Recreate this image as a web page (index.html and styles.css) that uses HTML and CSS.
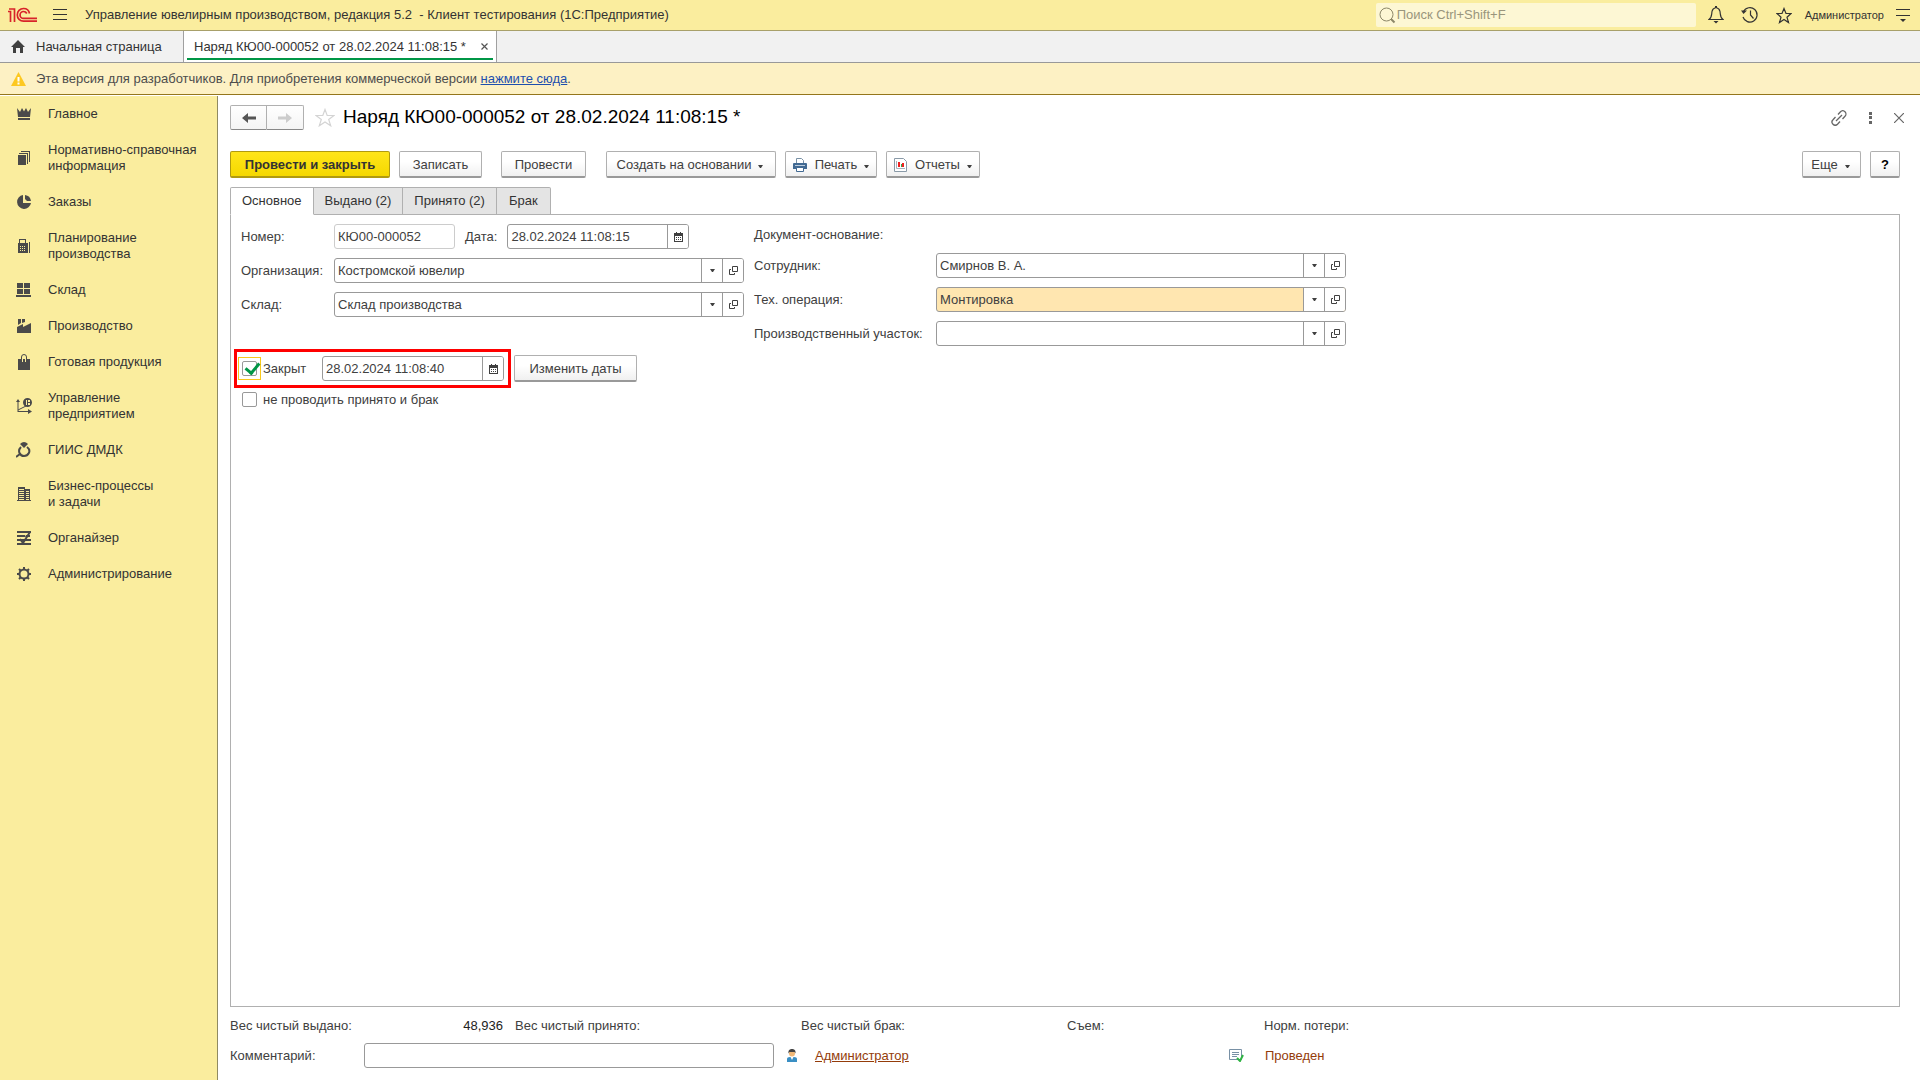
FILE: index.html
```html
<!DOCTYPE html>
<html lang="ru">
<head>
<meta charset="utf-8">
<title>Наряд КЮ00-000052 от 28.02.2024 11:08:15</title>
<link rel="stylesheet" href="styles.css">
</head>
<body>
<svg class="defs" width="0" height="0" aria-hidden="true">
  <symbol id="calendar" viewBox="0 0 9 10"><path fill="#404040" fill-rule="evenodd" d="M2 0h1v1h3V0h1v1h2v9H0V1h2zM1 4v5h7V4z"/><path fill="#404040" d="M2 5h1v1H2zm2 0h1v1H4zm2 0h1v1H6zM2 7h1v1H2zm2 0h1v1H4zm2 0h1v1H6z"/></symbol>
  <symbol id="open" viewBox="0 0 9 9"><path fill="none" stroke="#404040" d="M3.500.5h5v5h-5zM2 3.500H.5v5h5V7"/></symbol>
  <symbol id="caret" viewBox="0 0 5 3"><path fill="#404040" d="M0 0h5L3 3H2z"/></symbol>
</svg>
<div class="app">
  <header class="titlebar">
    <svg class="logo" width="30" height="16" viewBox="0 0 30 16" fill="none" stroke="#d8232a"><path stroke-width="1.700" d="M0 4.500h2.500V15M1 2h5.500v13M4 4v0M21.500 6.500C21 3.500 18.500 1.500 15.500 1.500A6.200 6.200 0 0 0 9.300 7.900a6.200 6.200 0 0 0 6.200 6.300H29M18.800 6.500A3.700 3.700 0 0 0 15.500 4.500a3.400 3.400 0 0 0 0 6.900H29"/></svg>
    <button class="icon-btn menu-btn" aria-label="Меню"><svg width="14" height="12" viewBox="0 0 14 12" stroke="#333"><path d="M0 .5h14M0 5.500h14M0 10.500h14"/></svg></button>
    <h1 class="app-name">Управление ювелирным производством, редакция 5.2 &nbsp;- Клиент тестирования (1С:Предприятие)</h1>
    <label class="search">
      <svg width="17" height="17" viewBox="0 0 17 17" fill="none" stroke="#8c8768"><circle cx="7.500" cy="7.500" r="6.500"/><path stroke-width="2" d="m12 12 3.500 3.500"/></svg>
      <input type="text" placeholder="Поиск Ctrl+Shift+F" aria-label="Поиск">
    </label>
    <div class="tools">
      <button class="icon-btn" aria-label="Уведомления"><svg width="16" height="18" viewBox="0 0 16 18" fill="none" stroke="#333" stroke-width="1.200"><path d="M1 13.500h14c-3-2-2.500-5-3-8C11.500 3 10 2 8 1.500 6 2 4.500 3 4 5.500c-.5 3 0 6-3 8z"/><path fill="#333" stroke="none" d="M5.500 15h5L8 17.500zM7 0h2v2H7z"/></svg></button>
      <button class="icon-btn" aria-label="История"><svg width="18" height="18" viewBox="0 0 18 18" fill="none" stroke="#333" stroke-width="1.200"><path d="M2.500 5.500A7.200 7.200 0 1 1 2 11M9.500 4.500V9l3 3.500"/><path fill="#333" stroke="none" d="M0 4.500h6L2.500 8z"/></svg></button>
      <button class="icon-btn" aria-label="Избранное"><svg width="16" height="17" viewBox="0 0 16 17" fill="none" stroke="#333" stroke-width="1.200"><path d="m8 1.500 2 5h5l-4 3.700 1.500 5.300L8 12.400l-4.500 3.100L5 10.200 1 6.500h5z"/></svg></button>
      <a class="user" href="#">Администратор</a>
      <button class="icon-btn" aria-label="Сервис"><svg width="14" height="14" viewBox="0 0 14 14"><path stroke="#333" d="M0 1.500h14M0 7.500h14"/><path fill="#333" d="M4 11h6l-3 3z"/></svg></button>
    </div>
  </header>

  <nav class="windows" aria-label="Открытые окна">
    <a class="window home" href="#"><svg width="14" height="13" viewBox="0 0 14 13"><path fill="#404040" d="M7 0l7 7h-2v6H9V8H5v5H2V7H0z"/></svg>Начальная страница</a>
    <div class="window current"><a href="#">Наряд КЮ00-000052 от 28.02.2024 11:08:15 *</a><button class="icon-btn" aria-label="Закрыть вкладку"><svg width="7" height="7" viewBox="0 0 7 7" stroke="#555" stroke-width="1.200"><path d="m.5.5 6 6m0-6-6 6"/></svg></button></div>
  </nav>

  <p class="notice"><svg width="15" height="14" viewBox="0 0 15 14"><path fill="#fdc821" d="M7.500 0 15 14H0z"/><path fill="#fff" d="M6.500 5h2v4.500h-2zM6.500 10.500h2v2h-2z"/></svg><span>Эта версия для разработчиков. Для приобретения коммерческой версии <a href="#">нажмите сюда</a>.</span></p>

  <div class="body">
    <nav class="sections" aria-label="Разделы">
      <a href="#"><svg viewBox="0 0 16 16"><path d="M1 2l3 4 2-4 2 3.500L10 2l2 4 3-4-1 9H2zM2 12h12v2H2z"/></svg>Главное</a>
      <a href="#"><svg viewBox="0 0 16 16"><path d="M2 5h8v10H2zM3 3h9v11h-1V4H3zM5 1h9v11h-1V2H5z"/></svg>Нормативно-справочная информация</a>
      <a href="#"><svg viewBox="0 0 16 16"><path d="M7 1v8h8a7 7 0 1 1-8-8zM9 1a7 7 0 0 1 6 6h-4L9 5z"/></svg>Заказы</a>
      <a href="#"><svg viewBox="0 0 16 16"><path fill-rule="evenodd" d="M2 5h1V1h7v4h2v10H2zM4 2v3h5V2zM4 8v1h1V8zm2 0v1h1V8zm2 0v1h1V8zM4 10v1h1v-1zm2 0v1h1v-1zm2 0v1h1v-1zM4 12v1h1v-1zm2 0v1h1v-1zm2 0v1h1v-1zM13 4h1v11h-1z"/></svg>Планирование производства</a>
      <a href="#"><svg viewBox="0 0 16 16"><path d="M1 1h6v5H1zm7 0h6v5H8zM1 7h6v5H1zm7 0h6v5H8zM0 13h15v2H0z"/></svg>Склад</a>
      <a href="#"><svg viewBox="0 0 16 16"><path d="M1 15V9l6-3v3l8-4v10zM2 1h3v4L2 7zm4 0h3v3L6 5z"/></svg>Производство</a>
      <a href="#"><svg viewBox="0 0 16 16"><path d="M2 5h12v11H2z"/><path fill="none" stroke="#4a4a4a" d="M5.500 6V3q0-2.500 2.500-2.500T10.500 3v3"/><path fill="none" stroke="#faed9e" d="M6.500 8V4.500h3V8"/></svg>Готовая продукция</a>
      <a href="#"><svg viewBox="0 0 16 16"><path d="M0 4l2-3 2 3H2.500v9H12v-2l4 2.500-4 2.500v-2H1.500V4z"/><path fill="none" stroke="#4a4a4a" d="m2 12 8-4"/><path fill-rule="evenodd" d="M11.500 0a4.500 4.500 0 1 1 0 9 4.500 4.500 0 0 1 0-9zM10 2v5h1V2zm2 0v2h2V2zm0 3v2h2V5z"/></svg>Управление предприятием</a>
      <a href="#"><svg viewBox="0 0 16 16"><path d="M4 2q4-4 8 0L8 6z"/><path fill="none" stroke="#4a4a4a" stroke-width="2" d="M11 5c5 4 1 9-3 9s-7-5-3-9M4 12l-4 3"/></svg>ГИИС ДМДК</a>
      <a href="#"><svg viewBox="0 0 16 16"><path d="M2 1h7v2h5v11h1v1H1v-1h1zM3 3v1h5V3zm0 2v1h5V5zm0 2v1h5V7zm0 2v1h5V9zm0 2v1h5v-1zm0 2v1h5v-1zM10 5v1h3V5zm0 2v1h3V7zm0 2v1h3V9zm0 2v1h3v-1zm0 2v1h3v-1z" fill-rule="evenodd"/></svg>Бизнес-процессы <br>и задачи</a>
      <a href="#"><svg viewBox="0 0 16 16"><path d="M1 1h14v2H1zM1 5h8v2H1zM10 5h4v2h-5zM1 9h14v2H1zM1 13h14v2H1z"/><path fill="none" stroke="#4a4a4a" stroke-width="2" d="m4 9 3 4 7-11"/></svg>Органайзер</a>
      <a href="#"><svg viewBox="0 0 16 16"><circle cx="8" cy="8" r="4.500" fill="none" stroke="#4a4a4a" stroke-width="2"/><path fill="none" stroke="#4a4a4a" stroke-width="2" d="M8 1v2.500M8 12.500V15M1 8h2.500M12.500 8H15M3 3l1.500 1.500M11.500 11.500 13 13M13 3l-1.500 1.500M4.500 11.500 3 13"/></svg>Администрирование</a>
    </nav>

    <main class="document">
      <div class="heading">
        <div class="history">
          <button aria-label="Назад"><svg width="14" height="10" viewBox="0 0 14 10"><path fill="#555" d="M0 5l6-5v3.500h8v3H6V10z"/></svg></button>
          <button aria-label="Вперед" disabled><svg width="14" height="10" viewBox="0 0 14 10"><path fill="#ccc" d="M14 5L8 0v3.500H0v3h8V10z"/></svg></button>
        </div>
        <button class="icon-btn" aria-label="В избранное"><svg width="20" height="19" viewBox="0 0 20 19" fill="none" stroke="#d4d4d4" stroke-width="1.200"><path d="m10 1.500 2.200 6H19l-5.300 4 2 6.300L10 14l-5.700 3.800 2-6.300L1 7.500h6.800z"/></svg></button>
        <h2>Наряд КЮ00-000052 от 28.02.2024 11:08:15 *</h2>
        <div class="heading-tools">
          <button class="icon-btn" aria-label="Ссылка"><svg width="16" height="16" viewBox="0 0 16 16" fill="none" stroke="#666" stroke-width="1.300"><path d="m5 11 6-6M7 4.500l2.500-2.700a3 3 0 0 1 4.500 4.500L11.500 9M4.500 7 2 9.700a3 3 0 0 0 4.500 4.500L9 11.500"/></svg></button>
          <button class="icon-btn" aria-label="Действия"><svg width="3" height="12" viewBox="0 0 3 12" fill="#666"><path d="M0 0h3v3H0zM0 4h3v3H0zM0 9h3v3H0z"/></svg></button>
          <button class="icon-btn" aria-label="Закрыть"><svg width="10" height="10" viewBox="0 0 10 10" stroke="#666" stroke-width="1.200"><path d="m0 0 10 10m0-10L0 10"/></svg></button>
        </div>
      </div>

      <div class="toolbar">
        <button class="btn primary">Провести и закрыть</button>
        <button class="btn save">Записать</button>
        <button class="btn post">Провести</button>
        <button class="btn create">Создать на основании<svg class="caret"><use href="#caret"/></svg></button>
        <button class="btn print"><svg width="14" height="14" viewBox="0 0 14 14"><path fill="#fff" stroke="#7890a5" d="M3.500 6V.5h5l2 2V6"/><path fill="#426a93" d="M1 5h12q1 0 1 1v5H0V6q0-1 1-1z"/><path stroke="#bcd" d="M2 7.500h10"/><path fill="#fff" stroke="#426a93" d="M3.500 9.500h7v4h-7z"/></svg>Печать<svg class="caret"><use href="#caret"/></svg></button>
        <button class="btn reports"><svg width="13" height="14" viewBox="0 0 13 14"><path fill="#fff" stroke="#8a9aa8" d="M.5.5h9l3 3v10H.5z"/><path fill="none" stroke="#a5b2bd" d="M2.500 3v7.500H11"/><path fill="#e22" d="M4 4h2v5H4z"/><path fill="#36a34a" d="M7 6h1v3H7z"/><path fill="#e22" d="M8 5h2v4H8z"/></svg>Отчеты<svg class="caret"><use href="#caret"/></svg></button>
        <span class="spacer"></span>
        <button class="btn more">Еще<svg class="caret"><use href="#caret"/></svg></button>
        <button class="btn help" aria-label="Справка">?</button>
      </div>

      <div class="tabs" role="tablist">
        <button class="tab" role="tab" aria-selected="true">Основное</button>
        <button class="tab" role="tab" aria-selected="false">Выдано (2)</button>
        <button class="tab" role="tab" aria-selected="false">Принято (2)</button>
        <button class="tab" role="tab" aria-selected="false">Брак</button>
      </div>

      <section class="panel">
        <div class="fields">
          <div class="column left">
            <div class="row">
              <label for="number">Номер:</label>
              <div class="field number"><input id="number" type="text" value="КЮ00-000052" readonly></div>
              <label class="date-label" for="date">Дата:</label>
              <div class="field date"><input id="date" type="text" value="28.02.2024 11:08:15"><button aria-label="Выбрать дату"><svg class="cal"><use href="#calendar"/></svg></button></div>
            </div>
            <div class="row">
              <label for="org">Организация:</label>
              <div class="field wide"><input id="org" type="text" value="Костромской ювелир"><button aria-label="Выбрать"><svg class="caret"><use href="#caret"/></svg></button><button aria-label="Открыть"><svg class="open"><use href="#open"/></svg></button></div>
            </div>
            <div class="row">
              <label for="store">Склад:</label>
              <div class="field wide"><input id="store" type="text" value="Склад производства"><button aria-label="Выбрать"><svg class="caret"><use href="#caret"/></svg></button><button aria-label="Открыть"><svg class="open"><use href="#open"/></svg></button></div>
            </div>
          </div>
          <div class="column right">
            <div class="basis">Документ-основание:</div>
            <div class="row">
              <label for="worker">Сотрудник:</label>
              <div class="field wide"><input id="worker" type="text" value="Смирнов В. А."><button aria-label="Выбрать"><svg class="caret"><use href="#caret"/></svg></button><button aria-label="Открыть"><svg class="open"><use href="#open"/></svg></button></div>
            </div>
            <div class="row">
              <label for="operation">Тех. операция:</label>
              <div class="field wide marked"><input id="operation" type="text" value="Монтировка"><button aria-label="Выбрать"><svg class="caret"><use href="#caret"/></svg></button><button aria-label="Открыть"><svg class="open"><use href="#open"/></svg></button></div>
            </div>
            <div class="row">
              <label for="area">Производственный участок:</label>
              <div class="field wide"><input id="area" type="text"><button aria-label="Выбрать"><svg class="caret"><use href="#caret"/></svg></button><button aria-label="Открыть"><svg class="open"><use href="#open"/></svg></button></div>
            </div>
          </div>
        </div>
        <div class="closing">
          <div class="highlight">
            <label class="check focused"><span class="tick"><input type="checkbox" checked></span>Закрыт</label>
            <div class="field date"><input type="text" value="28.02.2024 11:08:40" aria-label="Дата закрытия"><button aria-label="Выбрать дату"><svg class="cal"><use href="#calendar"/></svg></button></div>
          </div>
          <button class="btn dates">Изменить даты</button>
        </div>
        <label class="check skip"><span class="tick"><input type="checkbox"></span>не проводить принято и брак</label>
      </section>

      <footer class="summary">
        <div class="totals">
          <div class="total"><span>Вес чистый выдано:</span><output>48,936</output></div>
          <div>Вес чистый принято:</div>
          <div>Вес чистый брак:</div>
          <div>Съем:</div>
          <div>Норм. потери:</div>
        </div>
        <div class="comment">
          <label for="comment">Комментарий:</label>
          <div class="field wide"><input id="comment" type="text"></div>
          <svg class="person" width="10" height="14" viewBox="0 0 10 14"><path fill="#3a8fc4" d="M0 13v-3q0-2 3-2h4q3 0 3 2v3z"/><path fill="#fff" d="M3.500 8h3L5 11z"/><circle cx="5" cy="4.500" r="3" fill="#f0b878"/><path fill="#444" d="M1.500 4.500C1 1 3 0 5 0s4 1 3.500 4.500L7.500 3h-5z"/></svg>
          <a class="author" href="#">Администратор</a>
          <div class="status"><svg width="15" height="13" viewBox="0 0 15 13"><path fill="#fff" stroke="#7890a5" d="M.5.5h12v10H.5z"/><path stroke="#7890a5" d="M3 3.500h7M3 5.500h7M3 7.500h5"/><path fill="none" stroke="#2fb344" stroke-width="2" d="m8 9 3 3 3-6"/></svg>Проведен</div>
        </div>
      </footer>
    </main>
  </div>
</div>
</body>
</html>
```
FILE: styles.css
```css
* { box-sizing: border-box; }
body { margin: 0; background: #fff; color: #404040; font: 13px/16px "Liberation Sans", Arial, sans-serif; }
button, input { font: inherit; color: inherit; }
button { padding: 0; }
a { color: inherit; text-decoration: none; }
h1, h2, p { margin: 0; font-weight: normal; }
svg { flex: none; display: block; }
.defs { position: absolute; }
.app { display: flex; flex-direction: column; min-height: 100vh; }
.icon-btn { display: flex; align-items: center; justify-content: center; border: 0; background: none; }

.titlebar { display: flex; align-items: center; height: 31px; padding: 0 10px 0 8px; background: #faed9e; border-bottom: 1px solid #a8a06a; color: #333; }
.menu-btn { margin: 0 18px 0 15px; }
.app-name { font-size: 13px; flex: 1; white-space: nowrap; }
.search { display: flex; align-items: center; width: 320px; height: 24px; margin-right: 12px; padding-left: 3px; background: #fdf7d4; border-radius: 2px; }
.search input { flex: 1; min-width: 0; padding: 0 0 0 1px; border: 0; outline: 0; background: none; }
.search input::placeholder { color: #99957c; opacity: 1; }
.tools { display: flex; align-items: center; gap: 17px; }
.user { margin: 0 -5px 0 -4px; font-size: 11px; }

.windows { display: flex; height: 32px; background: #f1f1f1; border-bottom: 1px solid #999; }
.window { display: flex; align-items: center; color: #333; }
.home { gap: 11px; width: 183px; padding-left: 11px; }
.current { position: relative; justify-content: space-between; min-width: 314px; padding: 0 8px 0 10px; background: #fff; border: solid #a0a0a0; border-width: 0 1px; }
.current::after { content: ""; position: absolute; left: 3px; right: 3px; bottom: 2px; height: 2px; background: #009646; }

.notice { display: flex; align-items: center; gap: 10px; height: 32px; padding-left: 11px; background: #fdf1c4; border-bottom: 1px solid #94761c; color: #4d4d4d; }
.notice a { color: #1d4fae; text-decoration: underline; }

.body { display: flex; flex: 1; padding-top: 1px; }
.sections { flex: none; width: 218px; background: #faed9e; border-right: 1px solid #8f8a62; color: #333; }
.sections a { display: grid; grid-template-columns: 16px 1fr; gap: 16px; align-items: center; padding: 10px 16px; }
.sections svg { width: 16px; height: 16px; fill: #4a4a4a; }

.document { display: flex; flex-direction: column; flex: 1; min-width: 0; padding: 9px 20px 12px 12px; }
.heading { display: flex; align-items: center; height: 25px; }
.history { display: flex; margin-right: 11px; }
.history button { display: flex; align-items: center; justify-content: center; width: 37px; height: 25px; border: 1px solid #b0b0b0; border-bottom-color: #888; border-radius: 2px 0 0 2px; background: linear-gradient(#fff, #f4f4f4); }
.history button + button { border-left: 0; border-radius: 0 2px 2px 0; }
h2 { margin-left: 8px; padding-bottom: 2px; flex: 1; color: #000; font-size: 19px; line-height: 24px; }
.heading-tools { display: flex; align-items: center; gap: 22px; margin-right: -4px; }

.toolbar { display: flex; gap: 9px; margin-top: 21px; }
.btn { display: flex; align-items: center; justify-content: center; height: 27px; padding-top: 1px; border: 1px solid #b0b0b0; border-bottom: 2px solid #999; border-radius: 2px; background: linear-gradient(#fff 40%, #f0f0f0); white-space: nowrap; }
.caret { width: 5px; height: 3px; }
.btn .caret { margin: 4px 0 0 7px; }
.btn > svg:first-child { margin-right: 8px; }
.primary { width: 160px; background: linear-gradient(#ffe51a, #f5d800); border-color: #b09a10; color: #333; font-weight: bold; }
.save { width: 83px; }
.post { width: 85px; margin: 0 11px 0 10px; }
.create { width: 170px; padding-left: 6px; }
.print { width: 92px; }
.reports { width: 94px; }
.more { width: 59px; padding-left: 6px; }
.help { width: 30px; color: #000; font-weight: bold; }
.spacer { flex: 1; }

.tabs { display: flex; margin-top: 9px; }
.tab { height: 28px; padding: 0 11px; border: 1px solid #b0b0b0; border-left: 0; background: #e4e4e4; color: #333; }
.tab:first-child { border-left: 1px solid #b0b0b0; border-radius: 2px 0 0 0; }
.tab:last-child { padding: 0 12px; border-radius: 0 2px 0 0; }
.tab[aria-selected="true"] { position: relative; border-bottom-color: #fff; background: #fff; }
.panel { flex: 1; margin-top: -1px; padding: 9px 10px; border: 1px solid #b0b0b0; }

.fields { display: flex; gap: 10px; }
.column { display: flex; flex-direction: column; gap: 9px; }
.row { display: flex; align-items: center; }
.left .row > label:first-child { width: 93px; }
.right .row > label:first-child { width: 182px; }
.basis { height: 20px; line-height: 22px; }
.field { display: flex; height: 25px; border: 1px solid #999; border-radius: 3px; background: #fff; overflow: hidden; }
.field input { flex: 1; min-width: 0; padding: 0 3px; border: 0; outline: 0; background: none; }
.field button { display: flex; align-items: center; justify-content: center; width: 21px; border: 0; border-left: 1px solid #999; background: #fff; }
.wide { width: 410px; }
.number { width: 121px; border-color: #ccc; }
.date-label { margin: 0 10px; }
.date { width: 182px; }
.marked { background: #ffe6b0; }
.cal { width: 9px; height: 10px; }
.open { width: 9px; height: 9px; }

.closing { display: flex; align-items: center; gap: 3px; margin: 3px 0 0 -7px; }
.highlight { display: flex; align-items: center; height: 39px; padding: 0 4px 0 1px; border: 3px solid #f00; }
.check { display: flex; align-items: center; width: 84px; gap: 2px; }
.tick { display: flex; flex: none; padding: 3px; border: 1px solid transparent; }
.focused .tick { border-color: #f8c81c; }
.check input { appearance: none; width: 15px; height: 15px; margin: 0; border: 1px solid #999; border-radius: 2px; background: #fff; }
.check input:checked { position: relative; }
.check input:checked::after { content: ""; position: absolute; left: 5px; top: -2px; width: 6px; height: 11px; border: solid #009646; border-width: 0 3px 3px 0; transform: rotate(40deg); }
.dates { width: 123px; }
.skip { width: auto; margin-left: -3px; }

.summary { padding-top: 9px; }
.totals { display: grid; grid-template-columns: 285px 286px 266px 197px 1fr; line-height: 20px; }
.total { display: flex; justify-content: space-between; padding-right: 12px; }
.total output { color: #222; }
.comment { display: flex; align-items: center; margin-top: 7px; }
.comment label { width: 134px; }
.person { margin: 0 18px 0 13px; }
.author, .status { color: #943c0a; }
.author { width: 414px; text-decoration: underline; }
.status { display: flex; align-items: center; gap: 21px; }
```
